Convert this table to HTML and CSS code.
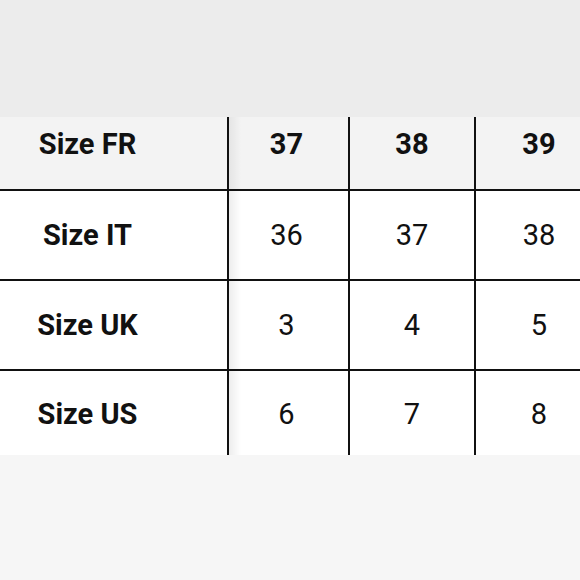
FILE: index.html
```html
<!DOCTYPE html>
<html lang="en">
<head>
<meta charset="utf-8">
<title>Size chart</title>
<link rel="stylesheet" href="styles.css">
</head>
<body>
<div class="page">
  <div class="top-band"></div>
  <div class="chart">
    <div class="cell label head">Size FR</div>
    <div class="cell num head bold first">37</div>
    <div class="cell num head bold">38</div>
    <div class="cell num head bold last">39</div>

    <div class="cell label">Size IT</div>
    <div class="cell num first">36</div>
    <div class="cell num">37</div>
    <div class="cell num last">38</div>

    <div class="cell label">Size UK</div>
    <div class="cell num first">3</div>
    <div class="cell num">4</div>
    <div class="cell num last">5</div>

    <div class="cell label end">Size US</div>
    <div class="cell num first end">6</div>
    <div class="cell num end">7</div>
    <div class="cell num last end">8</div>
  </div>
  <div class="bottom-band"></div>
</div>
</body>
</html>
```
FILE: styles.css
```css
html, body {
  margin: 0;
  padding: 0;
  overflow: hidden;
}
body {
  width: 580px;
  height: 580px;
  background: #f6f6f6;
  font-family: Roboto, "Liberation Sans", sans-serif;
  color: #111111;
}
.page {
  width: 580px;
  height: 580px;
  overflow: hidden;
  display: flex;
  flex-direction: column;
}
.top-band {
  height: 117px;
  flex: none;
  background: #ececec;
}
.chart {
  flex: none;
  width: 602px;
  display: grid;
  grid-template-columns: 229px 121px 126px 126px;
  grid-template-rows: 74px 90px 90px 84px;
  background: #ffffff;
}
.cell {
  display: flex;
  align-items: center;
  justify-content: center;
  border-right: 2px solid #111111;
  border-bottom: 2px solid #111111;
  font-size: 29px;
  line-height: 1;
}
.cell.last {
  border-right: none;
}
.cell.end {
  border-bottom: none;
  padding-top: 2px;
}
.label {
  font-weight: 700;
  padding-right: 52px;
  padding-left: 0;
}
.head {
  background: #f3f3f3;
  padding-bottom: 18px;
}
.num {
  font-weight: 400;
}
.num.first {
  padding-left: 0;
  padding-right: 4px;
  background: linear-gradient(to right, rgba(0,0,0,0.07), rgba(0,0,0,0) 12px), #ffffff;
}
.num.head.first {
  background: linear-gradient(to right, rgba(0,0,0,0.06), rgba(0,0,0,0) 12px), #f3f3f3;
}
.num.last {
  padding-left: 0;
}
.bold {
  font-weight: 700;
}
.bottom-band {
  flex: 1;
  background: #f6f6f6;
}
```
